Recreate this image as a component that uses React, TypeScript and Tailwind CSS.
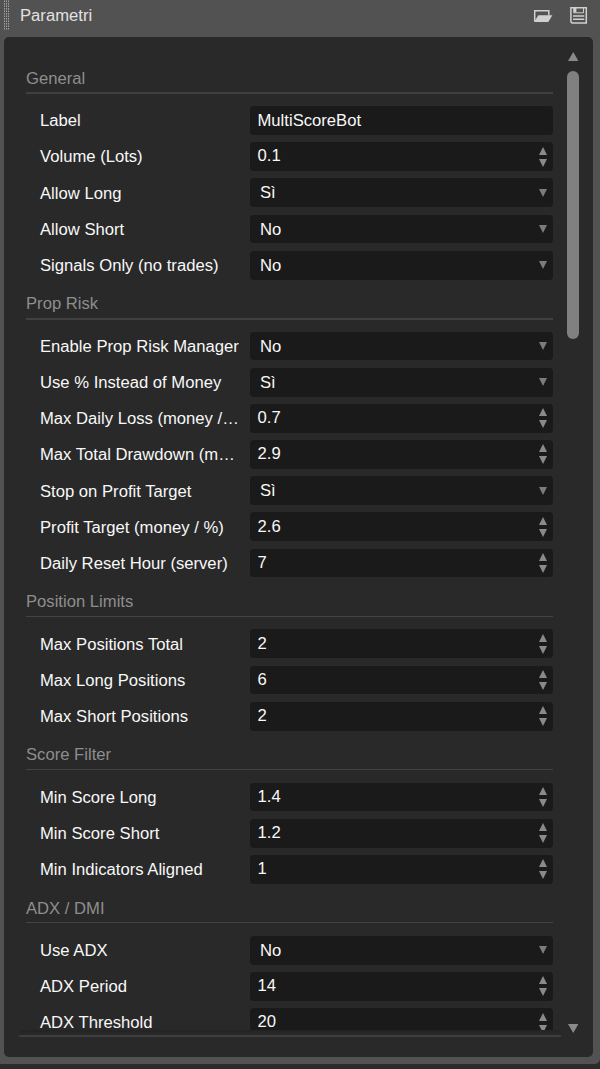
type Kind = 'text' | 'number' | 'select';
type Row = [label: string, kind: Kind, value: string];

const sections: { title: string; thick: boolean; rows: Row[] }[] = [
  {
    title: 'General',
    thick: true,
    rows: [
      ['Label', 'text', 'MultiScoreBot'],
      ['Volume (Lots)', 'number', '0.1'],
      ['Allow Long', 'select', 'Sì'],
      ['Allow Short', 'select', 'No'],
      ['Signals Only (no trades)', 'select', 'No'],
    ],
  },
  {
    title: 'Prop Risk',
    thick: true,
    rows: [
      ['Enable Prop Risk Manager', 'select', 'No'],
      ['Use % Instead of Money', 'select', 'Sì'],
      ['Max Daily Loss (money /…', 'number', '0.7'],
      ['Max Total Drawdown (m…', 'number', '2.9'],
      ['Stop on Profit Target', 'select', 'Sì'],
      ['Profit Target (money / %)', 'number', '2.6'],
      ['Daily Reset Hour (server)', 'number', '7'],
    ],
  },
  {
    title: 'Position Limits',
    thick: false,
    rows: [
      ['Max Positions Total', 'number', '2'],
      ['Max Long Positions', 'number', '6'],
      ['Max Short Positions', 'number', '2'],
    ],
  },
  {
    title: 'Score Filter',
    thick: false,
    rows: [
      ['Min Score Long', 'number', '1.4'],
      ['Min Score Short', 'number', '1.2'],
      ['Min Indicators Aligned', 'number', '1'],
    ],
  },
  {
    title: 'ADX / DMI',
    thick: false,
    rows: [
      ['Use ADX', 'select', 'No'],
      ['ADX Period', 'number', '14'],
      ['ADX Threshold', 'number', '20'],
    ],
  },
];

const gripRows = Array.from({ length: 12 }, (_, i) => 0.5 + i * 2.5);

function Triangle({ up = false, className }: { up?: boolean; className: string }) {
  return (
    <svg viewBox="0 0 8 8" preserveAspectRatio="none" className={className} fill="currentColor">
      <path d={up ? 'M4 0 8 8H0z' : 'M0 0h8L4 8z'} />
    </svg>
  );
}

function Field({ kind, value }: { kind: Kind; value: string }) {
  return (
    <div className="flex h-[28.8px] w-[303px] items-center justify-between rounded-[4px] bg-[#1a1a1a] pr-[6.5px] text-[#8a8a8a]">
      <span
        className={
          kind === 'select'
            ? 'pt-[1.4px] pl-[10px] leading-5 text-[#f8f8f8]'
            : kind === 'number'
              ? 'pb-[0.4px] pl-[7.5px] leading-5 text-[#f8f8f8]'
              : 'pt-[1.4px] pl-[7.5px] leading-5 text-[#f8f8f8]'
        }
      >
        {value}
      </span>
      {kind === 'number' && (
        <span className="flex flex-col gap-[4px]">
          <Triangle up className="h-[8px] w-[8px]" />
          <Triangle className="h-[8px] w-[8px]" />
        </span>
      )}
      {kind === 'select' && <Triangle className="h-[8px] w-[8px] text-[#7c7c7c]" />}
    </div>
  );
}

export default function App() {
  return (
    <div className="h-[1069px] w-[600px] overflow-hidden bg-[#2b2b2b] font-['Liberation_Sans',Arial,sans-serif] text-[16.65px]">
      <div className="flex h-[1064px] flex-col rounded-br-[5px] bg-[#525252] pr-[7px] pb-[7px] pl-[4px]">
        <header className="flex h-[37px] shrink-0 items-start">
          <svg viewBox="0 0 5 30" className="h-[30px] w-[5px]" fill="#a0a0a0">
            {gripRows.map((y) => (
              <path key={y} d={`M0 ${y}h1v1.5h-1zM2 ${y}h1v1.5h-1zM4 ${y}h1v1.5h-1z`} />
            ))}
          </svg>
          <h1 className="ml-[11px] pt-[6px] leading-5 text-[#e2e2e0]">Parametri</h1>
          <div className="mt-[7px] mr-[5px] ml-auto flex items-start gap-[17px]">
            <svg viewBox="0 0 20 14" className="mt-[2px] h-[14px] w-[20px]" fill="none">
              <path d="M1.7 12V1.7h14.1V6.5" stroke="#d0d0cc" strokeWidth="1.5" />
              <path d="M5.4 6.3h14L15.3 13H1z" fill="#d0d0cc" />
            </svg>
            <svg viewBox="0 0 18 17" className="h-[17px] w-[18px]" fill="none" stroke="#d0d0cc">
              <path d="M.9.8h15.4v15.1H2.1L.9 14.9z" strokeWidth="1.5" />
              <path d="M3.7 1v4.8h9.8V1" strokeWidth="1" />
              <path d="M5.2 .5v4.8" strokeWidth="2.4" />
              <path d="M3 9h11.3M3 12.3h11.3" strokeWidth="1.4" />
            </svg>
          </div>
        </header>

        <main className="flex h-[1020px] w-[589px] flex-col rounded-[5px] bg-[#292929] pt-[14px]">
          <div className="flex h-[984px]">
            <div className="w-[557px] pl-[15px]">
              <div className="h-[979px] overflow-hidden pt-[10.4px] pl-[7px]">
                {sections.map((section) => (
                  <section key={section.title} className="w-[527px]">
                    <div className="flex h-[44.6px] flex-col">
                      <h2 className="h-[31px] shrink-0 pt-[7.4px] leading-5 text-[#8e8e8e]">{section.title}</h2>
                      <div
                        className={
                          section.thick ? 'h-[2px] shrink-0 bg-[#404040]' : 'h-px shrink-0 bg-[#444444]'
                        }
                      />
                    </div>
                    {section.rows.map(([label, kind, value]) => (
                      <div key={label} className="flex h-[36.2px] items-start justify-between pl-[14px]">
                        <span className="pt-[5.3px] leading-5 whitespace-nowrap text-[#f8f8f8]">{label}</span>
                        <Field kind={kind} value={value} />
                      </div>
                    ))}
                  </section>
                ))}
              </div>
              <div className="h-[5px] bg-linear-to-b from-[#232323] to-[#292929]" />
              <div className="h-[2px] w-[542px] bg-[#3d3d3d]" />
            </div>
            <div className="ml-[7px] flex w-[10px] flex-col items-center text-[#8a8a8a]">
              <Triangle up className="mt-px h-[9px] w-[10.5px] shrink-0" />
              <div className="mt-[10px] h-[268px] w-[11.5px] shrink-0 rounded-full bg-[#808080]" />
              <Triangle className="mt-auto mb-[2px] h-[9px] w-[10.5px] shrink-0" />
            </div>
          </div>
        </main>
      </div>
    </div>
  );
}
